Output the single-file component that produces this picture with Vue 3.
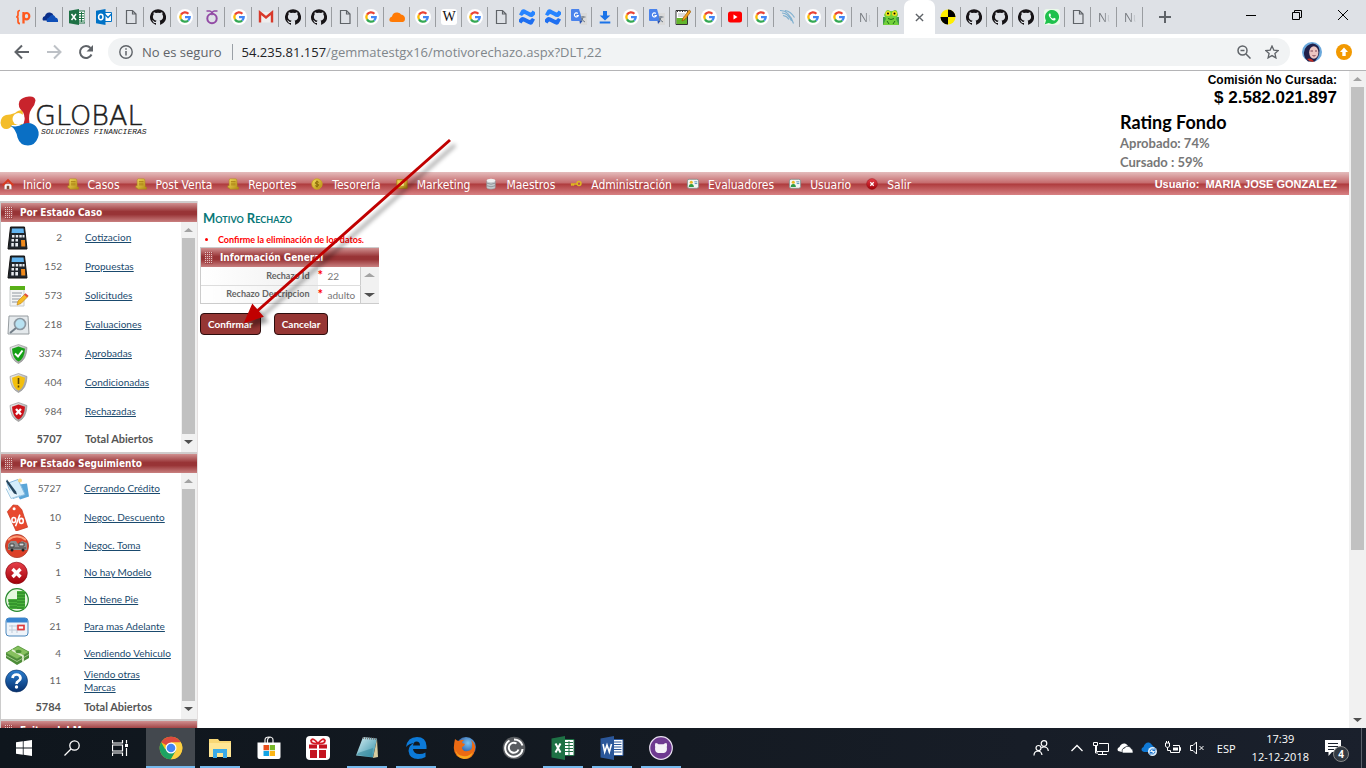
<script setup>
const wideTabs = ['brackets', 'cloud', 'excel', 'outlook', 'file', 'github', 'google', 'omega', 'google', 'gmail', 'github']
const midTabs = [
  'github', 'file', 'google', 'orange', 'google', 'wiki', 'google', 'file', 'confluence', 'confluence', 'translate',
  'download', 'google', 'translate', 'notes', 'google', 'youtube', 'google', 'dolphin', 'google', 'google', 'text'
]
const lateTabs = ['bmw', 'github', 'github', 'github', 'whatsapp', 'file', 'text', 'text']

const menu = [
  { label: 'Inicio', icon: 'm-home' },
  { label: 'Casos', icon: 'm-scroll' },
  { label: 'Post Venta', icon: 'm-scroll' },
  { label: 'Reportes', icon: 'm-scroll' },
  { label: 'Tesorería', icon: 'm-coin' },
  { label: 'Marketing', icon: 'm-board' },
  { label: 'Maestros', icon: 'm-db' },
  { label: 'Administración', icon: 'm-key' },
  { label: 'Evaluadores', icon: 'm-card' },
  { label: 'Usuario', icon: 'm-card' },
  { label: 'Salir', icon: 'm-exit' }
]

const panels = [
  {
    title: 'Por Estado Caso', total: 5707, kind: 'cases',
    rows: [
      { icon: 's-calc', n: 2, label: 'Cotizacion' },
      { icon: 's-calc', n: 152, label: 'Propuestas' },
      { icon: 's-form', n: 573, label: 'Solicitudes' },
      { icon: 's-search', n: 218, label: 'Evaluaciones' },
      { icon: 's-ok', n: 3374, label: 'Aprobadas' },
      { icon: 's-warn', n: 404, label: 'Condicionadas' },
      { icon: 's-no', n: 984, label: 'Rechazadas' }
    ]
  },
  {
    title: 'Por Estado Seguimiento', total: 5784, kind: 'follow',
    rows: [
      { icon: 's-sign', n: 5727, label: 'Cerrando Crédito', tall: true },
      { icon: 's-tag', n: 10, label: 'Negoc. Descuento', tall: true },
      { icon: 's-car', n: 5, label: 'Negoc. Toma' },
      { icon: 's-cross', n: 1, label: 'No hay Modelo' },
      { icon: 's-coins', n: 5, label: 'No tiene Pie' },
      { icon: 's-cal', n: 21, label: 'Para mas Adelante' },
      { icon: 's-cash', n: 4, label: 'Vendiendo Vehiculo' },
      { icon: 's-help', n: 11, label: 'Viendo otras Marcas' }
    ]
  }
]

const apps = [
  { icon: 't-chrome', name: 'Chrome', state: 'active' },
  { icon: 't-folder', name: 'Explorador', state: 'open' },
  { icon: 't-store', name: 'Tienda', state: '' },
  { icon: 't-gift', name: 'Regalos', state: '' },
  { icon: 't-note', name: 'Bloc de notas', state: 'open' },
  { icon: 't-edge', name: 'Edge', state: 'open' },
  { icon: 't-fox', name: 'Firefox', state: '' },
  { icon: 't-swirl', name: 'Citrix', state: '' },
  { icon: 't-excel', name: 'Excel', state: 'open' },
  { icon: 't-word', name: 'Word', state: 'open' },
  { icon: 't-cat', name: 'GitHub', state: 'open' }
]
</script>

<template>
  <svg class="defs" aria-hidden="true">
    <defs>
      <linearGradient id="gRed" x1="0" y1="0" x2="0" y2="1"><stop offset="0" stop-color="#e8404a" /><stop offset="1" stop-color="#a00008" /></linearGradient>
      <linearGradient id="gBlue" x1="0" y1="0" x2="0" y2="1"><stop offset="0" stop-color="#2b7fd0" /><stop offset="1" stop-color="#06306e" /></linearGradient>
      <linearGradient id="gSilver" x1="0" y1="0" x2="1" y2="1"><stop offset="0" stop-color="#f4f4f4" /><stop offset="1" stop-color="#8c8c8c" /></linearGradient>
      <linearGradient id="gGold" x1="0" y1="0" x2="1" y2="1"><stop offset="0" stop-color="#f8e060" /><stop offset="1" stop-color="#b08a10" /></linearGradient>
      <linearGradient id="gGlass" x1="0" y1="0" x2="1" y2="1"><stop offset="0" stop-color="#d8f0f4" /><stop offset="1" stop-color="#2f8ea6" /></linearGradient>
      <radialGradient id="gFox" cx=".6" cy=".3" r=".6"><stop offset="0" stop-color="#7cc4f0" /><stop offset="1" stop-color="#1c4a9c" /></radialGradient>
    </defs>

    <!-- tab favicons -->
    <symbol id="brackets" viewBox="0 0 16 16"><path d="M5 1.500Q3 1.500 3 3.500V6q0 1.800-1.800 1.800Q3 7.800 3 9.600v3q0 2 2 2" fill="none" stroke="#ff5a1f" stroke-width="1.700" /><path d="M8.500 14.500V3" stroke="#ff5a1f" stroke-width="2.300" /><ellipse cx="11.500" cy="7.200" rx="2.800" ry="3.200" fill="none" stroke="#ff5a1f" stroke-width="2.200" /></symbol>
    <symbol id="cloud" viewBox="0 0 16 16"><path d="M1 11.500Q-.5 8 3 7q1-4 5-3.500Q11 4 11.500 6.500L9 7Q7 8 7 11.500z" fill="#0a2f8a" /><path d="M5 13q-1.500-3.500 2-4.500Q8 5.500 11 6q2 .5 2.500 2.500 3 .5 2.500 4.500z" fill="#0f4fb8" /></symbol>
    <symbol id="excel" viewBox="0 0 16 16"><path d="M9 2h7v12H9z" fill="#fff" stroke="#1e7145" /><path d="M10 4.500h5M10 7h5M10 9.500h5M10 12h5M12.500 3v10" stroke="#1e7145" /><path d="M0 1.800 10 0v16L0 14.200z" fill="#1e7145" /><path d="m2.500 5 4.500 6M7 5l-4.500 6" stroke="#fff" stroke-width="1.500" /></symbol>
    <symbol id="outlook" viewBox="0 0 16 16"><path d="M8 3.500h7.500v9H8z" fill="#fff" stroke="#0072c6" /><path d="m8.500 5 3.500 3.500L15.500 5" fill="none" stroke="#0072c6" stroke-width="1.300" /><path d="M0 1.800 9.500 0v16L0 14.200z" fill="#0072c6" /><ellipse cx="4.800" cy="8" rx="2.200" ry="2.700" fill="none" stroke="#fff" stroke-width="1.500" /></symbol>
    <symbol id="file" viewBox="0 0 16 16"><path d="M3.500 1.500h6l3.500 3.500v9.500H3.500zM9.500 1.500V5H13" fill="none" stroke="#5f6368" stroke-width="1.200" /></symbol>
    <symbol id="github" viewBox="0 0 16 16"><path d="M8 .2a8 8 0 0 0-2.500 15.600c.4.100.500-.2.500-.4v-1.500c-2.200.5-2.700-1-2.700-1-.4-.9-.9-1.200-.9-1.200-.7-.5.100-.5.100-.5.800.1 1.200.8 1.200.8.7 1.200 1.900.9 2.300.7.100-.5.300-.9.500-1.100-1.800-.2-3.600-.9-3.600-4 0-.9.300-1.600.8-2.100-.1-.2-.4-1 .1-2.200 0 0 .7-.2 2.200.8a7.500 7.500 0 0 1 4 0c1.500-1 2.200-.8 2.200-.8.500 1.200.2 2 .1 2.200.5.500.8 1.200.8 2.100 0 3.100-1.800 3.800-3.600 4 .3.300.6.800.6 1.500v2.300c0 .2.100.5.500.4A8 8 0 0 0 8 .2" fill="#161316" /></symbol>
    <symbol id="google" viewBox="0 0 16 16"><circle cx="8" cy="8" r="8" fill="#fff" /><g fill="none" stroke-width="2.300"><path d="M4 5.600A4.700 4.700 0 0 1 11.400 4.700" stroke="#ea4335" /><path d="M4 10.400A4.800 4.800 0 0 1 4 5.600" stroke="#fbbc05" /><path d="M11.200 11.500A4.700 4.700 0 0 1 4 10.400" stroke="#34a853" /><path d="M8 8.200h4.700a4.700 4.700 0 0 1-1.500 3.300" stroke="#4285f4" /></g></symbol>
    <symbol id="omega" viewBox="0 0 16 16"><circle cx="8" cy="9.500" r="4.700" fill="none" stroke="#924ba5" stroke-width="2" /><path d="M2.500 2h3.300q1.500 0 2.200 2.300Q8.700 2 10.200 2h3.300" fill="none" stroke="#924ba5" stroke-width="1.500" /></symbol>
    <symbol id="gmail" viewBox="0 0 16 16"><path d="M1.500 3h13v10.500h-13z" fill="#eee" /><path d="M2 13.500V3.500l6 5 6-5v10" fill="none" stroke="#d8392b" stroke-width="2.400" /></symbol>
    <symbol id="orange" viewBox="0 0 16 16"><path d="M1 12.500Q-1 9 3 7.500 4 3 8.500 3.500q3 .5 3.500 2 4 .5 4 4.500 0 2.500-2 3H3z" fill="#ff7a05" /></symbol>
    <symbol id="confluence" viewBox="0 0 16 16"><path d="M0 10.500 2 8.500Q4 7 7.500 9.500l3 1.500q1 0 2.500-2l3 1.500-2.500 4.500q-2 1.500-5-.5l-4-2q-1 0-2 2L0 13z" fill="#1f6ff0" /><path d="M16 5.500 14 7.500Q12 9 8.500 6.500l-3-1.500q-1 0-2.500 2L0 5.500 2.500 1q2-1.500 5 .5l4 2q1 0 2-2L16 3z" fill="#2684ff" /></symbol>
    <symbol id="translate" viewBox="0 0 16 16"><path d="M7 4h9v12H9.500z" fill="#dadada" /><path d="M0 1q0-1 1-1h7l3.500 12H1q-1 0-1-1z" fill="#4a83ec" /><path d="M6.800 4.500a2 2 0 1 0 .5 2H5.500" fill="none" stroke="#fff" stroke-width="1.100" /><path d="M9.500 8h5M12 7v1.500q-.5 3-3 4M10.500 9q1 3 3.500 4" fill="none" stroke="#6d7884" /><path d="m8.500 12 3 0-2.500 3z" fill="#2850b0" /></symbol>
    <symbol id="download" viewBox="0 0 16 16"><path d="M6 2h4v4.500h3.300L8 11.500l-5.300-5H6zM2.700 12.500h10.600v2H2.700z" fill="#1a73e8" /></symbol>
    <symbol id="notes" viewBox="0 0 16 16"><path d="M1 1.500h11.500V15.500H1z" fill="#fff" stroke="#333" /><path d="M1.500 9h10.500v6H1.500z" fill="#62b52c" /><path d="M2.500 1v2M5 1v2M7.500 1v2M10 1v2" stroke="#333" /><path d="M3 5h7M3 7h6" stroke="#b5b5b5" /><path d="m7 12 1-3 6-8 2 1.500-6 8z" fill="#f0a020" stroke="#8a4a00" stroke-width=".6" /></symbol>
    <symbol id="youtube" viewBox="0 0 16 16"><rect x="1" y="2.500" width="14" height="11" rx="2.500" fill="#f00" /><path d="m6.500 5.500 4 2.500-4 2.500z" fill="#fff" /></symbol>
    <symbol id="dolphin" viewBox="0 0 16 16"><path d="M1 1.500q9-.5 13.500 13M3 4q6 0 9.500 8M4 6.500q4 .5 6 4M6 1.500q6 1 9.500 7" fill="none" stroke="#7fb0d0" stroke-width="1.100" /></symbol>
    <symbol id="frog" viewBox="0 0 16 16"><path d="M0 8h16v8H0z" fill="#3f9a4a" /><path d="M3 2q2-2 4 0h3q2-2 4 0l1 4-2 4 3 6H0l3-6-2-4z" fill="#72d03a" /><circle cx="5" cy="4.500" r="2.500" fill="#f7e21c" /><circle cx="11.500" cy="4.500" r="2.500" fill="#f7e21c" /><circle cx="5" cy="4.500" r="1" /><circle cx="11.500" cy="4.500" r="1" /><path d="M5 9.500q3 2 6 0M4 12l2 3M12 12l-2 3" stroke="#1d6b18" fill="none" /></symbol>
    <symbol id="bmw" viewBox="0 0 16 16"><circle cx="8" cy="8" r="7.500" fill="#ffef00" /><path d="M8 8V.5A7.500 7.500 0 0 1 15.500 8zM8 8v7.500A7.500 7.500 0 0 1 .5 8z" fill="#000" /></symbol>
    <symbol id="whatsapp" viewBox="0 0 16 16"><rect width="16" height="16" rx="3" fill="#eafbe9" /><path d="M.8 15.200 2 11.500a7 7 0 1 1 2.700 2.600z" fill="#1fc14c" /><path d="M5.500 4.500q-1.500 1 0 3.500 2.500 4 5 3.500 1.500-.5 1-2l-1.500-.8-1 1q-2-.7-2.700-2.500l.7-.9-.7-1.700z" fill="#fff" /></symbol>

    <!-- menu icons -->
    <symbol id="m-home" viewBox="0 0 14 14"><path d="M3 7h8v6H3z" fill="#fff" stroke="#b9b0b0" stroke-width=".6" /><path d="M0 8 7 1l7 7-1.500 1.500L7 4.500 1.500 9.500z" fill="#d93a20" /><path d="M5.500 9h3v4h-3z" fill="#7c4a32" /></symbol>
    <symbol id="m-scroll" viewBox="0 0 14 14"><path d="M4 1h6q1.500 0 1.500 1.500L12 10.500h1.500V13H4q-1.500 0-1.500-1.500H1V9h1.500V3Q2.500 1 4 1" fill="url(#gGold)" stroke="#a8841c" stroke-width=".6" /><path d="M4.500 4h5.500M4.500 6h5.500M4.500 8h5.500" stroke="#a67c12" /></symbol>
    <symbol id="m-coin" viewBox="0 0 14 14"><circle cx="7" cy="7" r="6" fill="url(#gGold)" stroke="#c8a81c" /><path d="M9 5Q7 3.500 5.500 5T7 7t1.500 2T5 9M7 3v8" fill="none" stroke="#7c5c00" /></symbol>
    <symbol id="m-board" viewBox="0 0 14 14"><path d="M1 2h12v10H1z" fill="url(#gGold)" stroke="#a88212" /><path d="M4 5h5v4H4z" fill="#fff5a0" /></symbol>
    <symbol id="m-db" viewBox="0 0 14 14"><path d="M2 3v8q0 2 5 2t5-2V3" fill="#c5cacd" stroke="#8a9094" stroke-width=".6" /><ellipse cx="7" cy="3" rx="5" ry="2" fill="#eef1f2" /><path d="M2 6q5 2.500 10 0M2 9q5 2.500 10 0" fill="none" stroke="#888f94" /></symbol>
    <symbol id="m-key" viewBox="0 0 14 14"><path d="M1 7h8M2 7v2M4 7v2" stroke="#e0b820" stroke-width="1.800" /><circle cx="10.500" cy="6.500" r="2.300" fill="none" stroke="#e0b820" stroke-width="1.700" /></symbol>
    <symbol id="m-card" viewBox="0 0 14 14"><rect x=".5" y="1.500" width="13" height="10.500" rx="2" fill="#f4f6f4" stroke="#87908c" /><circle cx="5" cy="5" r="1.800" fill="#e8b820" /><path d="M2 10.500Q2 7 5 7t3 3.500z" fill="#2f9a45" /><path d="M8.500 4.500H12M9 6.500h3" stroke="#458ab0" /></symbol>
    <symbol id="m-exit" viewBox="0 0 14 14"><circle cx="7" cy="7" r="6.300" fill="url(#gRed)" stroke="#901018" stroke-width=".5" /><path d="m5 5 4 4M9 5 5 9" stroke="#fff" stroke-width="1.500" /></symbol>

    <!-- sidebar icons -->
    <symbol id="s-calc" viewBox="0 0 24 24"><path d="M4.500 1h14l2.500 22H2z" fill="#20262c" stroke="#111" /><path d="M6 2.500h11.500l.5 4.500H5.500z" fill="#62b5f0" /><path d="M6 9h2.500v2.500H6zM9.700 9h2.500v2.500H9.700zM13.300 9h2.500v2.500h-2.500zM5.500 13H8v2.500H5.500zM9.500 13H12v2.500H9.500zM5.300 17h2.500v3.500H5.300zM9.300 17H12v3.500H9.300zM16.500 9h2v2.500h-2z" fill="#e8ecf0" /><path d="M15 14h4l.3 6.500h-4z" fill="#f08a1c" /></symbol>
    <symbol id="s-form" viewBox="0 0 24 24"><path d="M4 3h14v19H4z" fill="#f3f4f4" stroke="#c8cccc" /><path d="M4 2h15v4H4z" fill="#58b018" /><path d="M6 9h10M6 12h9M6 15h8M6 18h6" stroke="#9098a0" /><path d="m11 21 1-4 7-7 3 2.500-7 7z" fill="#f4bc24" stroke="#c07c10" stroke-width=".6" /><path d="m18 10.800 1.500-1.600 3 2.500-1.500 1.600z" fill="#e05040" /></symbol>
    <symbol id="s-search" viewBox="0 0 24 24"><path d="M3 3h19l1 18H2z" fill="#e4e9ec" stroke="#969ca0" /><circle cx="14" cy="11" r="5.500" fill="#b8e2f2" stroke="#8c98a2" stroke-width="1.700" /><path d="m10 15-6 5" stroke="#737e88" stroke-width="2" /></symbol>
    <symbol id="s-ok" viewBox="0 0 24 24"><path d="m12.500 2.500 8.500 3Q20.500 18 12.500 21.500 4.500 18 4 5.500z" fill="url(#gSilver)" stroke="#8c8c8c" stroke-width=".6" /><path d="m12.500 4.500 6.500 2.200q-.5 9.800-6.500 12.800-6-3-6.500-12.800z" fill="#15a015" /><path d="m9 11.500 3 3 4.500-6" fill="none" stroke="#fff" stroke-width="2" /></symbol>
    <symbol id="s-warn" viewBox="0 0 24 24"><path d="m12.500 2.500 8.500 3Q20.500 18 12.500 21.500 4.500 18 4 5.500z" fill="url(#gSilver)" stroke="#8c8c8c" stroke-width=".6" /><path d="m12.500 4.500 6.500 2.200q-.5 9.800-6.500 12.800-6-3-6.500-12.800z" fill="#f3bf0c" /><path d="M12.500 7v6M12.500 14.500v2" stroke="#5a4500" stroke-width="1.600" /></symbol>
    <symbol id="s-no" viewBox="0 0 24 24"><path d="m12.500 2.500 8.500 3Q20.500 18 12.500 21.500 4.500 18 4 5.500z" fill="url(#gSilver)" stroke="#8c8c8c" stroke-width=".6" /><path d="m12.500 4.500 6.500 2.200q-.5 9.800-6.500 12.800-6-3-6.500-12.800z" fill="#cc1018" /><path d="m10 9 5 5.500M15 9l-5 5.500" stroke="#fff" stroke-width="2.300" /></symbol>
    <symbol id="s-sign" viewBox="0 0 24 24"><path d="m7 9 15-2 2 13-9 3z" fill="#5aa6d8" /><path d="m2 7 11-4 7 15-12 4z" fill="#d4edfa" stroke="#8abce0" /><path d="m1 12 5 10 9-3" fill="#e8f5fc" stroke="#a6cde4" /><path d="m2 3 9 12 1 3-3-1L1 5z" fill="#27465e" /><circle cx="15" cy="4" r="2" fill="#f5d888" /></symbol>
    <symbol id="s-tag" viewBox="0 0 24 28"><path d="m2 8 6-7 5 .5L17 6l6 18-12 4z" fill="#e8492e" stroke="#c23018" stroke-width=".7" /><circle cx="9" cy="5" r="1.600" fill="#fff" /><g fill="none" stroke="#fff" stroke-width="1.600"><ellipse cx="8.700" cy="16.500" rx="2" ry="2.600" /><ellipse cx="16.500" cy="17.500" rx="2" ry="2.600" /><path d="m15 11-4.500 12" /></g></symbol>
    <symbol id="s-car" viewBox="0 0 24 24"><circle cx="12" cy="12" r="11.500" fill="#dd4028" stroke="#b44838" /><path d="M3 6q9-7 18 0" fill="none" stroke="#ff9c78" stroke-width="2" /><path d="m3 10 3-3h5l2 3 4-3 5 2v7H3z" fill="#8c8c8c" /><path d="M5 10h4v3H5zM14 9h5v3h-5zM3 14h18" fill="#d8d8d8" stroke="#444" /><circle cx="7" cy="16" r="1.500" fill="#222" /><circle cx="18" cy="16" r="1.500" fill="#222" /></symbol>
    <symbol id="s-cross" viewBox="0 0 24 24"><circle cx="11.500" cy="12" r="10.800" fill="url(#gRed)" stroke="#800008" stroke-width=".6" /><path d="m7.500 8 8 8M15.500 8l-8 8" stroke="#fff" stroke-width="3.400" /></symbol>
    <symbol id="s-coins" viewBox="0 0 24 24"><circle cx="12" cy="12" r="11.300" fill="#e6f8e0" stroke="#2a8a30" stroke-width="1.200" /><path d="M12 3h8v18h-8zM3 11h9v10H5z" fill="#48b03a" /><path d="M12 5h8M12 8h8M12 11h8M12 14h8M12 17h8M12 20h7M3 13h9M3 16h9M4 19h8" stroke="#1a6e1c" stroke-width=".8" /></symbol>
    <symbol id="s-cal" viewBox="0 0 24 24"><rect x="1" y="3" width="22" height="18" rx="3" fill="#eef4fa" stroke="#4b87bd" /><path d="M1.500 7.500V6q0-3 3-3h15q3 0 3 3v1.500z" fill="#3784d0" /><path d="M4 11h15M4 15h15M7 10v8M12 10v8" stroke="#bfcbd8" /><rect x="13" y="10.500" width="6" height="4" fill="#fff" stroke="#e03c3c" stroke-width="1.700" /></symbol>
    <symbol id="s-cash" viewBox="0 0 24 24"><path d="m1 11 12-7 11 6v6l-12 7L1 16z" fill="#4d8c38" /><path d="m1 11 12-7 11 6-12 7z" fill="#86c05e" stroke="#55953e" stroke-width=".7" /><path d="m7 8 11 6v6" fill="none" stroke="#e4efd4" stroke-width="1.800" /><path d="M1 13.500l11 6 12-7" fill="none" stroke="#b4d69c" stroke-width=".8" /><ellipse cx="13.500" cy="9.500" rx="3" ry="1.800" fill="#4b9233" /></symbol>
    <symbol id="s-help" viewBox="0 0 24 24"><circle cx="11.500" cy="12" r="11" fill="url(#gBlue)" stroke="#062a5c" stroke-width=".6" /><path d="M7.500 9q.5-3.500 4-3.500t4 3.500q0 2-2 3t-2 3" fill="none" stroke="#fff" stroke-width="2.700" /><circle cx="11.500" cy="18" r="1.700" fill="#fff" /></symbol>

    <!-- taskbar icons -->
    <symbol id="t-chrome" viewBox="0 0 24 24"><circle cx="12" cy="12" r="11.300" fill="#fbc116" /><path d="M12 12 2.200 6.300A11.300 11.300 0 0 1 21.800 6.300z" fill="#dd4b3e" /><path d="M2.200 6.300A11.300 11.300 0 0 0 12 23.300L17 14.500 12 12 6 13z" fill="#1da362" /><path d="M12 6.300h9.800A11.300 11.300 0 0 1 12 23.300l5-8.500z" fill="#fdd043" /><circle cx="12" cy="12" r="5.500" fill="#fff" /><circle cx="12" cy="12" r="4.300" fill="#4385f5" /></symbol>
    <symbol id="t-folder" viewBox="0 0 24 24"><path d="M1 3h9l1.500 2H23v16H1z" fill="#f8d775" /><path d="M1 7h22v14H1z" fill="#ffe694" /><path d="M5 13h14v9h-4v-5H9v5H5z" fill="#3aabe8" /></symbol>
    <symbol id="t-store" viewBox="0 0 24 24"><path d="M8 7V4q0-3 4-3t4 3v3M10.500 7V4q0-2 3-3" fill="none" stroke="#eee" stroke-width="1.200" /><path d="M.5 6.500h23V21q0 2-2 2h-19q-2 0-2-2z" fill="#fff" /><path d="M6.500 9H12v5.200H6.500z" fill="#e84e1b" /><path d="M12.700 9H18v5.200h-5.300z" fill="#78b829" /><path d="M6.500 14.900H12V20H6.500z" fill="#12a4e6" /><path d="M12.700 14.900H18V20h-5.300z" fill="#fcb514" /></symbol>
    <symbol id="t-gift" viewBox="0 0 24 24"><rect width="24" height="24" rx="4" fill="#fff" /><path d="M3 8.500h8v4H3zM13 8.500h8v4h-8zM4 14h7v8H4zM13 14h7v8h-7z" fill="#c41420" /><path d="M12 7.500Q5 8 5 4.500 7 1 12 7.500 17 1 19 4.500 19 8 12 7.500" fill="none" stroke="#d41c26" stroke-width="1.800" /></symbol>
    <symbol id="t-note" viewBox="0 0 24 24"><path d="m8 1 14 1.500-4 19-17-2z" fill="url(#gGlass)" /><path d="m8 2 13 1" stroke="#777" stroke-width="2" stroke-dasharray="1 1" /><path d="m22 3 1 18-5 1z" fill="#d8cda0" /><path d="m3 17 15-5-1 9-15-2z" fill="#2a7f96" opacity=".5" /></symbol>
    <symbol id="t-edge" viewBox="0 0 24 24"><path d="M2 11Q3.500 1 13 1q9 0 9.500 9v3H9q.5 5 6.500 5 3.500 0 6-1.500V21Q18 23 14 23 5.500 23 4.500 15 4.500 9.500 10 7 5 7.500 2 11m7-1.500h7q0-4-3.500-4-3 0-3.500 4" fill="#0c7ad8" /></symbol>
    <symbol id="t-fox" viewBox="0 0 24 24"><circle cx="13" cy="11" r="10" fill="url(#gFox)" /><path d="M2 3q2 2 4 2 3-2 5-1-2 1-2 3l3 1q-1 3-3 3 0 5 6 4 4-1 4-4 1-4-1-7 5 4 4 10-2 9-10 9Q1 22 .8 12 1 7 2 3" fill="#ec6a13" /><path d="M2 12q1 7 8 8 6 1 10-4-2 7-9 7Q3 22 2 12" fill="#f8a91e" /></symbol>
    <symbol id="t-swirl" viewBox="0 0 24 24"><circle cx="12" cy="12" r="11.300" fill="#595c60" /><g fill="none" stroke="#fff" stroke-width="2"><path d="M7.500 4.500a8.700 8.700 0 1 0 13 8.500" /><path d="M14.500 7.500a5 5 0 1 0 2 6" /><path d="M12 3.500q6.500 0 8.500 6" /></g></symbol>
    <symbol id="t-excel" viewBox="0 0 24 24"><path d="M12 3.500h11v16H12z" fill="#fff" stroke="#1e7145" /><path d="M14 6.500h8M14 9.500h8M14 12.500h8M14 15.500h8M18 5v14" stroke="#1e7145" /><path d="M.5 2.500 14 0v24L.5 21.500z" fill="#1e7145" /><path d="m4.500 7.500 5 9M9.500 7.500l-5 9" stroke="#fff" stroke-width="2" /></symbol>
    <symbol id="t-word" viewBox="0 0 24 24"><path d="M12 3.500h11v16H12z" fill="#fff" stroke="#2b579a" /><path d="M14 6h7.500M14 8.500h7.500M14 11h7.500M14 13.500h7.500M14 16h7.500" stroke="#2b579a" /><path d="M.5 2.500 14 0v24L.5 21.500z" fill="#2b579a" /><path d="m3 8 1.700 8 2.300-7 2.300 7L11.500 8" fill="none" stroke="#fff" stroke-width="1.600" /></symbol>
    <symbol id="t-cat" viewBox="0 0 24 24"><circle cx="12" cy="12" r="11.300" fill="#6e3a90" stroke="#e8dff0" stroke-width="1.200" /><path d="M6.500 7q1.500 0 3 1.200h5q1.500-1.200 3-1.200 1 2 .3 4 1 5-2.800 6H9q-3.800-1-2.800-6-.7-2 .3-4" fill="#f5f2f8" /></symbol>
  </svg>

  <div class="screen">
    <header class="browser">
      <div class="tabs">
        <button v-for="(t, i) in wideTabs" :key="'w' + i" class="tab wide" :aria-label="'Pestaña ' + t"><svg><use :href="'#' + t" /></svg></button>
        <button v-for="(t, i) in midTabs" :key="'m' + i" class="tab" :aria-label="'Pestaña ' + t">
          <span v-if="t === 'text'" class="tabtext">Nu</span>
          <span v-else-if="t === 'wiki'" class="wiki">W</span>
          <svg v-else><use :href="'#' + t" /></svg>
        </button>
        <button class="tab last" aria-label="Pestaña frog"><svg><use href="#frog" /></svg></button>
        <div class="tab-active">
          <button class="close" aria-label="Cerrar pestaña"><svg viewBox="0 0 10 10"><path d="m1 1 8 8M9 1 1 9" stroke="#5f6368" stroke-width="1.500" /></svg></button>
        </div>
        <button v-for="(t, i) in lateTabs" :key="'l' + i" class="tab" :aria-label="'Pestaña ' + t">
          <span v-if="t === 'text'" class="tabtext">Nu</span>
          <svg v-else><use :href="'#' + t" /></svg>
        </button>
        <button class="newtab" aria-label="Nueva pestaña"><svg viewBox="0 0 12 12"><path d="M6 0v12M0 6h12" stroke="#5f6368" stroke-width="2" /></svg></button>
        <div class="wincontrols">
          <button aria-label="Minimizar"><svg viewBox="0 0 10 10"><path d="M0 5.500h10" stroke="#000" /></svg></button>
          <button aria-label="Restaurar"><svg viewBox="0 0 10 10"><path d="M.5 2.500h7v7h-7zM2.500 2.500v-2h7v7h-2" fill="none" stroke="#000" /></svg></button>
          <button aria-label="Cerrar"><svg viewBox="0 0 10 10"><path d="m0 0 10 10M10 0 0 10" stroke="#000" /></svg></button>
        </div>
      </div>
      <div class="toolbar">
        <button class="tool" aria-label="Atrás"><svg viewBox="0 0 16 16"><path d="M15 8H2M8 1.500 1.500 8 8 14.500" fill="none" stroke="#5f6368" stroke-width="2" /></svg></button>
        <button class="tool" aria-label="Adelante"><svg viewBox="0 0 16 16"><path d="M1 8h13M8 1.500 14.500 8 8 14.500" fill="none" stroke="#bdc1c6" stroke-width="2" /></svg></button>
        <button class="tool" aria-label="Recargar"><svg viewBox="0 0 16 16"><path d="M13.500 10.500A6 6 0 1 1 12.500 4" fill="none" stroke="#5f6368" stroke-width="2" /><path d="M15 1v6.500H8.500z" fill="#5f6368" /></svg></button>
        <div class="omnibox">
          <svg class="info" viewBox="0 0 14 14"><circle cx="7" cy="7" r="6.200" fill="none" stroke="#5f6368" stroke-width="1.400" /><path d="M7 6v4.500M7 3.300v1.500" stroke="#5f6368" stroke-width="1.500" /></svg>
          <span class="insecure">No es seguro</span>
          <label class="host" for="addr">54.235.81.157</label>
          <input id="addr" class="path" type="text" value="/gemmatestgx16/motivorechazo.aspx?DLT,22">
          <button class="mini" aria-label="Zoom"><svg viewBox="0 0 14 14"><circle cx="5.500" cy="5.500" r="4.500" fill="none" stroke="#5f6368" stroke-width="1.500" /><path d="m9 9 4.500 4.500M3.500 5.500h4" stroke="#5f6368" stroke-width="1.500" /></svg></button>
          <button class="mini star" aria-label="Favorito"><svg viewBox="0 0 14 14"><path d="m7 1 1.800 4.100 4.500.4-3.400 3 1 4.400L7 10.600l-3.900 2.300 1-4.400-3.400-3 4.500-.4z" fill="none" stroke="#5f6368" stroke-width="1.300" /></svg></button>
        </div>
        <button class="avatar" aria-label="Perfil"><svg viewBox="0 0 20 20"><circle cx="10" cy="10" r="10" fill="#6aa8dc" /><path d="M3 16Q0 9 5 4q6-5 11 0 3 4 0 11l-3 4.500H6z" fill="#20204a" /><ellipse cx="11.800" cy="10.500" rx="4.600" ry="6.200" fill="#ecc6c2" /><path d="M8.500 9h2.500M13 9h2M10.500 13.500q1.500 1 3 0" stroke="#61233a" stroke-width=".8" fill="none" /><path d="M5 17q4-2 7 2.500-4 1-7-2.500" fill="#c82c20" /></svg></button>
        <button class="update" aria-label="Actualizar"><svg viewBox="0 0 16 16"><circle cx="8" cy="8" r="8" fill="#f29900" /><path d="m8 3.500 4 4.500h-2.300v4H6.300V8H4z" fill="#fff" /></svg></button>
      </div>
    </header>

    <div class="viewport">
      <div class="page">
        <div class="banner">
          <svg class="logo" viewBox="0 0 156 56" role="img" aria-label="Global Soluciones Financieras">
            <path d="M23 16Q18 16 15 19 10 21 6 21 1 22 .5 29q1 6.500 6.500 6 4-1 5-4l10 0z" fill="#f4bd2a" />
            <path d="M29 2.500Q35 2 35.500 6.500 35 11 31.500 15 28 20 29.500 29l-6.500 2Q26 24 23 18 17 13 19.500 7 22 3 29 2.500" fill="#c8232c" />
            <path d="M10 31.500Q17 34 23 30q8-3 13 2.500 4 5 2 11-3 8-10 8-8 0-10.500-8Q16 35 10 31.500" fill="#0a6fc4" />
            <circle cx="18.500" cy="25" r="6" fill="#fff" />
            <text x="35" y="31" class="brand">GLOBAL</text>
            <text x="41" y="40" class="subbrand">SOLUCIONES FINANCIERAS</text>
          </svg>
          <div class="figures">
            <p class="fee">Comisión No Cursada:</p>
            <p class="amount">$ 2.582.021.897</p>
            <div class="rating">
              <h2>Rating Fondo</h2>
              <p>Aprobado: 74%</p>
              <p>Cursado : 59%</p>
            </div>
          </div>
        </div>

        <nav class="menu">
          <a v-for="m in menu" :key="m.label" href="#"><svg><use :href="'#' + m.icon" /></svg>{{ m.label }}</a>
          <span class="user">Usuario:&nbsp; MARIA JOSE GONZALEZ</span>
        </nav>

        <div class="columns">
          <aside class="side">
            <section v-for="p in panels" :key="p.title" class="panel" :class="p.kind">
              <h3 class="bar"><i class="grip"></i>{{ p.title }}</h3>
              <div class="panelbody">
                <ul>
                  <li v-for="r in p.rows" :key="r.label" :class="{ tall: r.tall }">
                    <svg><use :href="'#' + r.icon" /></svg>
                    <span class="n">{{ r.n }}</span>
                    <a href="#">{{ r.label }}</a>
                  </li>
                  <li class="total"><span class="n">{{ p.total }}</span><span>Total Abiertos</span></li>
                </ul>
                <div class="scroll" aria-hidden="true"><i class="up"></i><b></b><i class="down"></i></div>
              </div>
            </section>
            <section class="panel"><h3 class="bar"><i class="grip"></i>Exitos del Mes</h3></section>
          </aside>

          <main class="main">
            <h1>Motivo Rechazo</h1>
            <ul class="errors"><li>Confirme la eliminación de los datos.</li></ul>
            <form class="form" @submit.prevent>
              <div class="box">
                <h3 class="bar"><i class="grip"></i>Información General</h3>
                <div class="boxbody">
                  <table>
                    <tbody>
                      <tr><th scope="row">Rechazo Id</th><td><em>*</em>22</td></tr>
                      <tr><th scope="row">Rechazo Descripcion</th><td><em>*</em>adulto</td></tr>
                    </tbody>
                  </table>
                  <div class="scroll plain" aria-hidden="true"><i class="up"></i><i class="down"></i></div>
                </div>
              </div>
              <div class="actions">
                <button type="submit">Confirmar</button>
                <button type="button">Cancelar</button>
              </div>
            </form>
          </main>
        </div>
      </div>
      <div class="scroll pagebar" aria-hidden="true"><i class="up"></i><div class="track"><b></b></div><i class="down"></i></div>
    </div>

    <footer class="taskbar">
      <button class="sys" aria-label="Inicio"><svg viewBox="0 0 16 16"><path d="M0 2.200 6.800 1.300V7.600H0zM7.600 1.200 16 0v7.600H7.600zM0 8.400h6.800v6.300L0 13.800zM7.600 8.400H16V16l-8.400-1.200z" fill="#fff" /></svg></button>
      <button class="sys" aria-label="Buscar"><svg viewBox="0 0 16 16"><circle cx="10.500" cy="5.500" r="4.700" fill="none" stroke="#fff" stroke-width="1.300" /><path d="M7 9 .5 15.500" stroke="#fff" stroke-width="1.300" /></svg></button>
      <button class="sys" aria-label="Vista de tareas"><svg viewBox="0 0 16 16"><path d="M.5 0v3h10V0M.5 16v-3h10v3M.5 5h10v6H.5zM14.500 0v3.500M14.500 8v8" fill="none" stroke="#fff" stroke-width="1.200" /><path d="M13 4h3v3h-3z" fill="#fff" /></svg></button>
      <button v-for="a in apps" :key="a.name" class="app" :class="a.state" :aria-label="a.name"><svg><use :href="'#' + a.icon" /></svg></button>
      <div class="tray">
        <svg class="people" viewBox="0 0 16 16"><g fill="none" stroke="#fff" stroke-width="1.200"><circle cx="11" cy="3.500" r="2.800" /><path d="M8.500 8Q9 7 11 7q4 0 4.300 4" /><circle cx="5.500" cy="8" r="2.500" /><path d="M1 15.500Q1 11 5.500 11 8.500 11.500 9 15" /></g></svg>
        <svg class="chev" viewBox="0 0 16 16"><path d="m2.500 11 5.500-5.500 5.500 5.500" fill="none" stroke="#fff" stroke-width="1.300" /></svg>
        <svg viewBox="0 0 16 16"><path d="M6 3.500h9.500v8H3.500V6M5 14.500h9M9.500 11.500v3M.5 2.500h4v3h-4zM2.500 5.500V13H5" fill="none" stroke="#fff" /></svg>
        <svg viewBox="0 0 16 16"><path d="M1 11Q-.5 8 2.500 7 4 3 8 3.500q2 .5 3 2.500L8 7Q5 8 5 12z" fill="#fff" /><path d="M5.500 13q-1.500-4 2-5Q9 5.500 12 6.500q1.500.5 2 2 2.500 1 2 4.500z" fill="#fff" stroke="#1a212c" stroke-width=".6" /></svg>
        <svg viewBox="0 0 16 16"><path d="M1 11Q-.5 8 2.500 7 4 2 8 2.500q2 .5 3 2.500l4 4-1 3H3z" fill="#0f78d4" /><circle cx="11.500" cy="11.500" r="4.500" fill="#e4f1fc" /><path d="M9 11.500a2.500 2.500 0 0 1 4.500-1.500M14 11.500A2.500 2.500 0 0 1 9.500 13M14 8v2.500h-2.500M9 15v-2.500h2.500" fill="none" stroke="#1a72cc" /></svg>
        <svg viewBox="0 0 16 16"><path d="M5.500 10.500v2h9v-7H8M14.500 7.500h1v3h-1M.5 3h4v3q-.5 1.500-2 1.500T.5 6zM1.500 1v2M3.500 1v2M2.500 7.500v3h3" fill="none" stroke="#fff" /><path d="M8 7.500h5v3H8z" fill="#fff" /></svg>
        <svg viewBox="0 0 16 16"><path d="M1.500 5.500H4L7.500 2v12L4 10.500H1.500zM10.500 6l4 4M14.500 6l-4 4" fill="none" stroke="#fff" /></svg>
        <span class="lang">ESP</span>
        <div class="clock"><span>17:39</span><span>12-12-2018</span></div>
        <button class="notify" aria-label="Notificaciones"><svg viewBox="0 0 16 16"><path d="M0 0h16v12H7l-3.500 4V12H0z" fill="#fff" /><path d="M3 3.500h10M3 6.500h10M3 9.500h6" stroke="#1a212c" /></svg><b>4</b></button>
      </div>
    </footer>

    <svg class="pointer" viewBox="0 0 230 200" aria-hidden="true">
      <path d="M215 8 20 181" stroke="#c00000" stroke-width="3" />
      <path d="M10 190 17.500 173 27.500 184.500z" fill="#c00000" stroke="#c00000" stroke-width="1.500" />
    </svg>
  </div>
</template>

<style>
body { margin: 0; overflow: hidden; }
</style>

<style scoped>
* { box-sizing: border-box; }
button { border: 0; padding: 0; margin: 0; background: none; font: inherit; display: flex; align-items: center; justify-content: center; }
p, h1, h2, h3, ul { margin: 0; padding: 0; }
.defs { position: absolute; width: 0; height: 0; }
.screen { position: relative; display: flex; flex-direction: column; height: 100vh; background: #fff; font-family: Lato, "Open Sans", sans-serif; }

.tabs { display: flex; height: 34px; padding-left: 9px; background: #dee1e6; }
.tab { width: 26px; flex: none; background: linear-gradient(#9a9da1, #9a9da1) right 7px / 1px 20px no-repeat; }
.tab.wide { width: 27px; }
.tab.last { background: none; }
.tab svg { width: 16px; height: 16px; }
.wiki { width: 16px; height: 16px; border-radius: 3px; background: #fff; font: 14px/16px "Liberation Serif", serif; color: #111; }
.tabtext { width: 12px; overflow: hidden; font: 12px "Open Sans", sans-serif; color: #777b80; -webkit-mask-image: linear-gradient(90deg, #000 50%, transparent); mask-image: linear-gradient(90deg, #000 50%, transparent); }
.tab-active { width: 31px; display: flex; justify-content: center; background: #fff; border-radius: 7px 7px 0 0; }
.close svg { width: 9px; height: 9px; }
.newtab { width: 44px; }
.newtab svg { width: 12px; height: 12px; }
.wincontrols { display: flex; margin-left: auto; height: 29px; }
.wincontrols button { width: 46px; }
.wincontrols svg { width: 10px; height: 10px; }

.toolbar { display: flex; align-items: center; height: 37px; padding: 0 14px 0 6px; border-bottom: 1px solid #b4b4b6; background: #fff; }
.tool { width: 32px; }
.tool svg { width: 16px; height: 16px; }
.omnibox { display: flex; align-items: center; flex: 1; height: 28px; margin: 0 12px 0 6px; padding: 0 10px 0 11px; border-radius: 14px; background: #f1f3f4; font: 13px "Open Sans", sans-serif; }
.info { width: 14px; height: 14px; margin-right: 9px; }
.insecure { padding-right: 10px; margin-right: 9px; border-right: 1px solid #9aa0a6; line-height: 16px; color: #5f6368; }
.host { color: #202124; }
.path { flex: 1; min-width: 0; padding: 0; border: 0; outline: 0; background: none; font: inherit; color: #80868b; }
.mini { width: 40px; }
.mini.star { width: 16px; }
.mini svg { width: 14px; height: 14px; }
.avatar svg { width: 20px; height: 20px; }
.update { margin-left: 14px; }
.update svg { width: 16px; height: 16px; }

.viewport { display: flex; flex: 1; min-height: 0; }
.page { flex: 1; min-width: 0; overflow: hidden; }
.scroll { display: flex; flex-direction: column; width: 16px; flex: none; background: #f1f1f1; padding: 0 2px 0 1px; }
.scroll i { flex: none; height: 16px; background: #a3a3a3; background-clip: content-box; padding: 6px 2px; clip-path: polygon(50% 6px, calc(100% - 2px) 10px, 2px 10px); }
.scroll .down { background-color: #505050; clip-path: polygon(50% 10px, calc(100% - 2px) 6px, 2px 6px); }
.scroll b { flex: 1; background: #c1c1c1; }
.pagebar { width: 17px; padding: 0 2px; }
.track { flex: 1; display: flex; flex-direction: column; }
.track b { flex: 0 0 74%; }

.banner { display: flex; justify-content: space-between; height: 101px; }
.logo { width: 156px; height: 56px; margin-top: 23px; }
.brand { font: 27px "DejaVu Sans Light", "DejaVu Sans", sans-serif; fill: #1c1c1c; stroke: #1c1c1c; stroke-width: .5px; }
.subbrand { font: italic 8px "Liberation Mono", monospace; fill: #222; }
.figures { width: 229px; padding: 1px 12px 0 0; }
.fee { text-align: right; font: bold 12px/16px "Liberation Sans", sans-serif; color: #000; }
.amount { text-align: right; font: bold 17px/20px "Liberation Sans", sans-serif; color: #000; }
.rating h2 { margin-top: 2px; font-size: 18px; line-height: 24px; font-weight: bold; color: #000; }
.rating p { font-size: 13px; line-height: 19px; font-weight: bold; color: #777; }

.menu { display: flex; align-items: center; height: 23px; padding: 0 12px 0 1px; gap: 14px; background: linear-gradient(#e4bcbc, #c56a6c 48%, #ae3b3d 52%, #d88284); color: #fff; font: 12px "DejaVu Sans Condensed", "DejaVu Sans", sans-serif; }
.menu a { display: flex; gap: 8px; line-height: 15px; padding-top: 3px; color: #fff; text-decoration: none; white-space: nowrap; }
.menu svg { width: 14px; height: 12px; flex: none; }
.user { margin-left: auto; font: bold 11px "Liberation Sans", sans-serif; white-space: nowrap; }

.columns { display: flex; padding-top: 6px; }
.side { width: 198px; flex: none; border-left: 1px solid #ccc; border-right: 1px solid #e4e0e0; }
.panel { border-top: 2px solid #cfcccc; }
.bar { display: flex; align-items: center; height: 19px; padding-left: 4px; background: linear-gradient(#d09090, #983436 45%, #983436 60%, #c98080); color: #fff; font: bold 10px "DejaVu Sans Condensed", "DejaVu Sans", sans-serif; }
.grip { width: 8px; height: 12px; margin-right: 7px; background: repeating-linear-gradient(90deg, transparent 0 1px, #a54a4c 1px 2px), repeating-linear-gradient(#e6c4c4 0 1px, #a54a4c 1px 2px); }
.panelbody { display: flex; }
.panelbody ul { flex: 1; list-style: none; padding-top: 1px; }
.panelbody li { display: flex; align-items: center; height: 29px; padding-left: 5px; font-size: 10px; line-height: 13px; color: #666; }
.panelbody li svg { width: 24px; height: 24px; flex: none; }
.n { width: 32px; flex: none; margin-right: 23px; text-align: right; }
.panelbody a { width: 88px; color: #1a4a6e; }
.panelbody .total { height: 25px; padding-left: 29px; font-size: 11px; font-weight: bold; color: #555; }
.cases ul { padding-bottom: 1px; }
.panel .panelbody .scroll { padding-bottom: 2px; }
.follow li { height: 27px; padding-left: 4px; }
.follow li.tall { height: 29px; }
.follow .total { padding-left: 28px; }
.follow .tall svg { height: 27px; }

.main { padding: 9px 0 0 2px; }
h1 { padding-left: 3px; font-size: 13px; line-height: 16px; font-weight: bold; font-variant: small-caps; color: #087878; }
.errors { margin-top: 7px; padding-left: 18px; list-style: disc; font-size: 9px; line-height: 13px; font-weight: bold; color: #f00; }
.box { width: 179px; margin-top: 1px; border: 1px solid #ccc; border-right: 0; }
.boxbody { display: flex; }
table { flex: 1; border-collapse: collapse; }
th, td { height: 18px; padding: 0; font-size: 10px; line-height: 14px; border-bottom: 1px solid #ddd; }
tr:last-child > * { border-bottom: 0; }
th { padding-right: 8px; text-align: right; color: #666; background: linear-gradient(90deg, #fff, #efefef); font-size: 9px; white-space: nowrap; }
td { width: 43px; color: #777; border-right: 1px solid #ccc; white-space: nowrap; }
em { display: inline-block; width: 10px; font-size: 13px; font-style: normal; font-weight: bold; color: #f00; }
.plain { justify-content: space-between; width: 18px; }
.actions { display: flex; gap: 13px; margin-top: 9px; }
.actions button { height: 22px; padding: 0 7px; border: 1px solid #2c0d0d; border-radius: 4px; background: #963634; color: #fff; font-size: 10px; font-weight: bold; }

.taskbar { display: flex; height: 40px; flex: none; background: linear-gradient(90deg, #0f161d, #141a22 50%, #1a202c); }
.sys { width: 48px; }
.sys svg { width: 16px; height: 16px; }
.app { width: 49px; position: relative; }
.sys + .app { margin-left: 2px; }
.app svg { width: 24px; height: 24px; }
.app.active { background: #43484e; border-bottom: 2px solid #76b9ed; padding-top: 2px; }
.app.open { background: linear-gradient(#76b9ed, #76b9ed) center bottom / 40px 2px no-repeat; }
.tray { display: flex; align-items: center; margin-left: auto; gap: 8px; color: #fff; font: 12px "Open Sans", sans-serif; border-right: 1px solid #5a606a; margin-right: 4px; padding-right: 20px; }
.tray svg { width: 16px; height: 16px; }
.tray .people { margin-right: 12px; }
.lang { margin-left: 4px; font-size: 11px; }
.clock { display: flex; flex-direction: column; align-items: center; margin: 0 8px; font-size: 11px; line-height: 18px; }
.notify { position: relative; }
.notify b { position: absolute; left: 8px; top: 6px; width: 16px; height: 16px; border: 1px solid #888; border-radius: 8px; background: #333a42; font-size: 10px; line-height: 14px; color: #fff; }

.pointer { position: absolute; left: 235px; top: 132px; width: 230px; height: 200px; pointer-events: none; filter: drop-shadow(5px 5px 2px rgba(0, 0, 0, .4)); }
</style>
